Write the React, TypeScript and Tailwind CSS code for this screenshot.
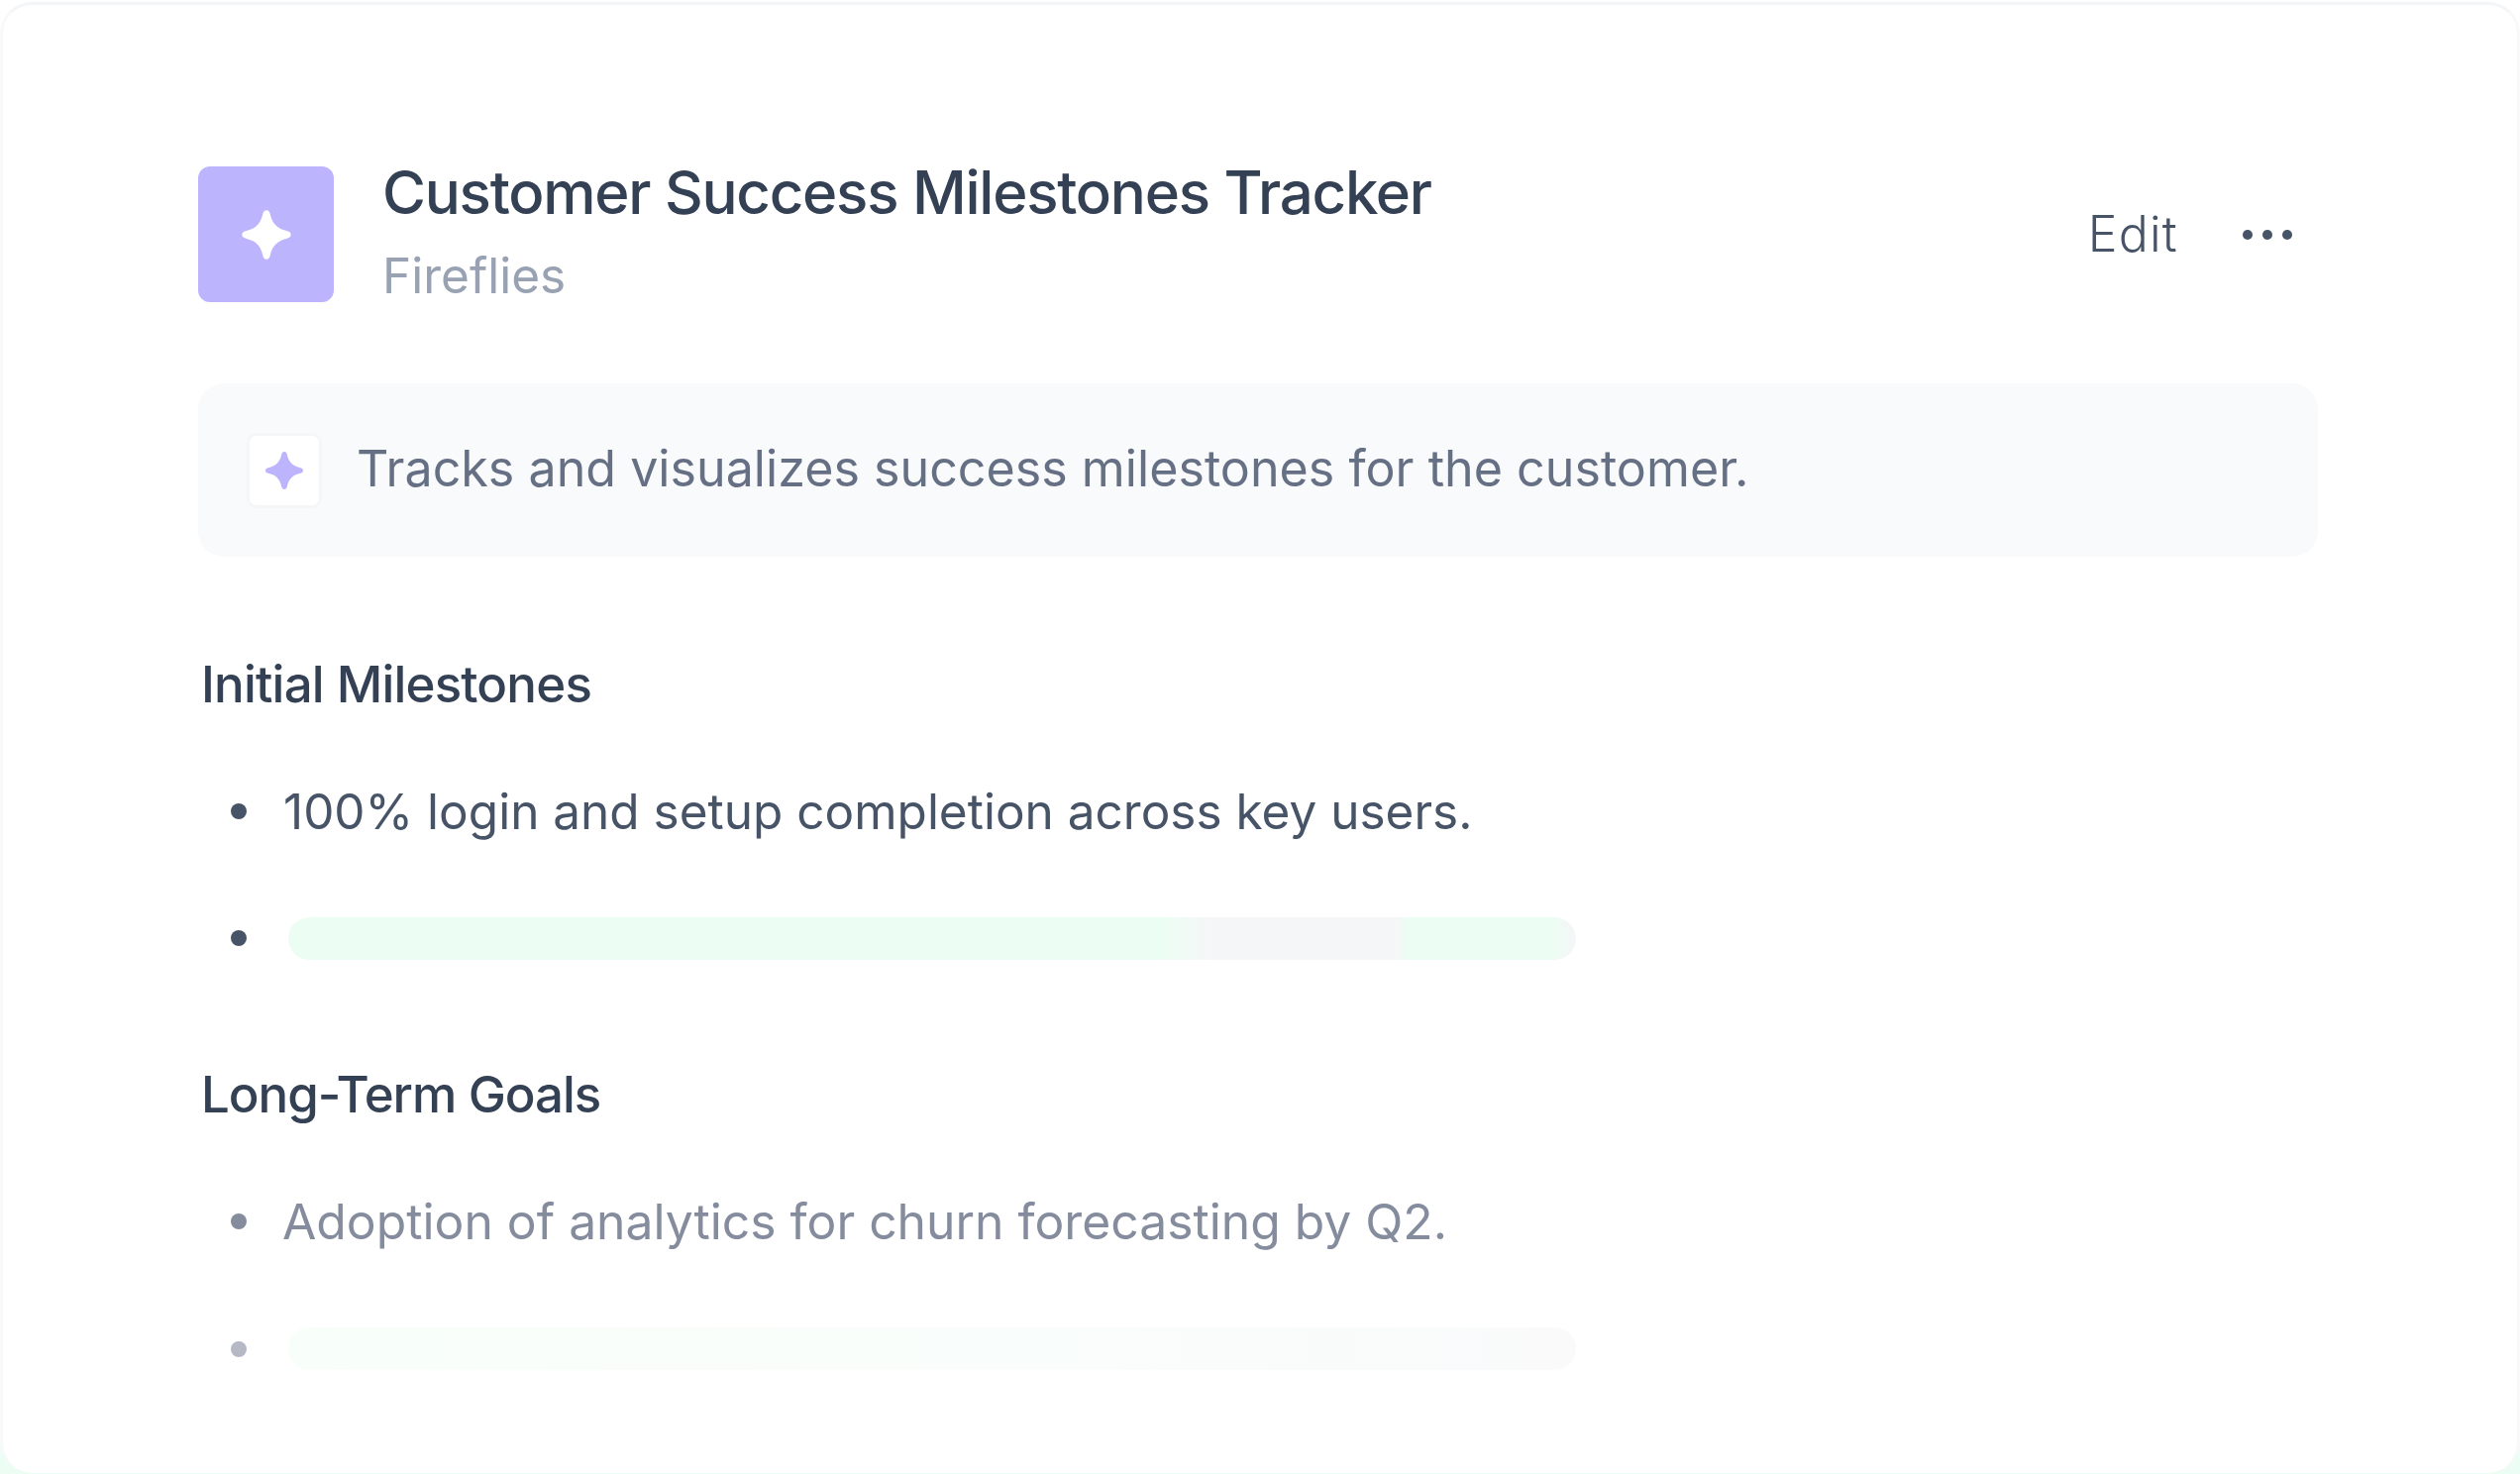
const Sparkle = ({ className }: { className: string }) => (
  <svg viewBox="0 0 24 24" className={className} fill="currentColor">
    <path d="M12 .6c1.1 0 1.5.9 1.8 2.1.9 4.1 3.4 6.6 7.5 7.5 1.2.3 2.1.7 2.1 1.8s-.9 1.5-2.1 1.8c-4.1.9-6.6 3.4-7.5 7.5-.3 1.2-.7 2.1-1.8 2.1s-1.5-.9-1.8-2.1c-.9-4.1-3.4-6.6-7.5-7.5C1.5 13.5.6 13.1.6 12s.9-1.5 2.1-1.8c4.1-.9 6.6-3.4 7.5-7.5C10.5 1.5 10.9.6 12 .6z" />
  </svg>
);

export default function App() {
  return (
    <div className="h-[1488px] w-[2544px] overflow-hidden bg-[linear-gradient(180deg,#ffffff_90%,#ecfdf3_97%)] pt-[2px] font-['Inter',sans-serif]">
      <div className="h-[1485px] w-full rounded-[32px] border-x-[3px] border-t-[3px] border-x-[#f8f9fa] border-t-[#f3f5f7] bg-white pl-[197px] pr-[201px] pt-[163px]">
        {/* Header */}
        <div className="flex h-[137px] items-center justify-between">
          <div className="flex items-center gap-[49px]">
            <div className="flex size-[137px] items-center justify-center rounded-[12px] bg-[#bdb4fe] text-white">
              <Sparkle className="size-[52px]" />
            </div>
            <div className="mb-[3px] flex flex-col">
              <h1 className="text-[60px] font-medium leading-[72px] tracking-[-1.25px] text-[#344054]">Customer Success Milestones Tracker</h1>
              <p className="mt-[14px] text-[49.5px] leading-[68px] text-[#98a2b3]">Fireflies</p>
            </div>
          </div>
          <div className="mr-[26px] flex items-center gap-[65px]">
            <span className="text-[50px] font-light tracking-[1.2px] text-[#475467]">Edit</span>
            <div className="flex items-center gap-[10px]">
              <span className="size-[10px] rounded-full bg-[#475467]" />
              <span className="size-[10px] rounded-full bg-[#475467]" />
              <span className="size-[10px] rounded-full bg-[#475467]" />
            </div>
          </div>
        </div>

        {/* Summary */}
        <div className="mt-[82px] flex h-[175px] items-center gap-[35px] rounded-[26px] bg-[#f9fafb] pl-[49px]">
          <div className="flex size-[76px] items-center justify-center rounded-[10px] border-[3px] border-[#f5f6f8] bg-white text-[#bdb4fe]">
            <Sparkle className="size-[40px]" />
          </div>
          <p className="mb-[3px] text-[50.2px] text-[#667085]">Tracks and visualizes success milestones for the customer.</p>
        </div>

        {/* Initial Milestones */}
        <h2 className="ml-[3px] mt-[95px] text-[51px] font-medium leading-[68px] tracking-[-0.8px] text-[#344054]">Initial Milestones</h2>
        <ul className="mt-[60px] flex flex-col gap-[73px]">
          <li className="flex h-[68px] items-center gap-[37px] pl-[33px]">
            <span className="size-[16px] rounded-full bg-[#475467]" />
            <span className="text-[49.5px] text-[#475467]">100% login and setup completion across key users.</span>
          </li>
          <li className="flex h-[43px] items-center gap-[42px] pl-[33px]">
            <span className="mb-[2px] size-[16px] rounded-full bg-[#475467]" />
            <div className="h-[43px] w-[1300px] rounded-full bg-[linear-gradient(90deg,#ecfdf3_0%,#ecfdf3_68%,#f5f6f8_71.5%,#f5f6f8_86%,#ecfdf3_87%,#ecfdf3_98%,#f5f6f8_100%)]" />
          </li>
        </ul>

        {/* Long-Term Goals */}
        <h2 className="ml-[3px] mt-[102px] text-[51px] font-medium leading-[68px] tracking-[-1.05px] text-[#344054]">Long-Term Goals</h2>
        <ul className="mt-[60px] flex flex-col gap-[73px]">
          <li className="flex h-[68px] items-center gap-[36px] pl-[33px]">
            <span className="size-[16px] rounded-full bg-[#848c9d]" />
            <span className="text-[49.8px] text-[#848c9d]">Adoption of analytics for churn forecasting by Q2.</span>
          </li>
          <li className="flex h-[43px] items-center gap-[42px] pl-[33px]">
            <span className="size-[16px] rounded-full bg-[#b5b9c6]" />
            <div className="h-[43px] w-[1300px] rounded-full bg-[linear-gradient(90deg,#f8fefa_0%,#f9fdfb_60%,#fafafb_100%)]" />
          </li>
        </ul>
      </div>
    </div>
  );
}
